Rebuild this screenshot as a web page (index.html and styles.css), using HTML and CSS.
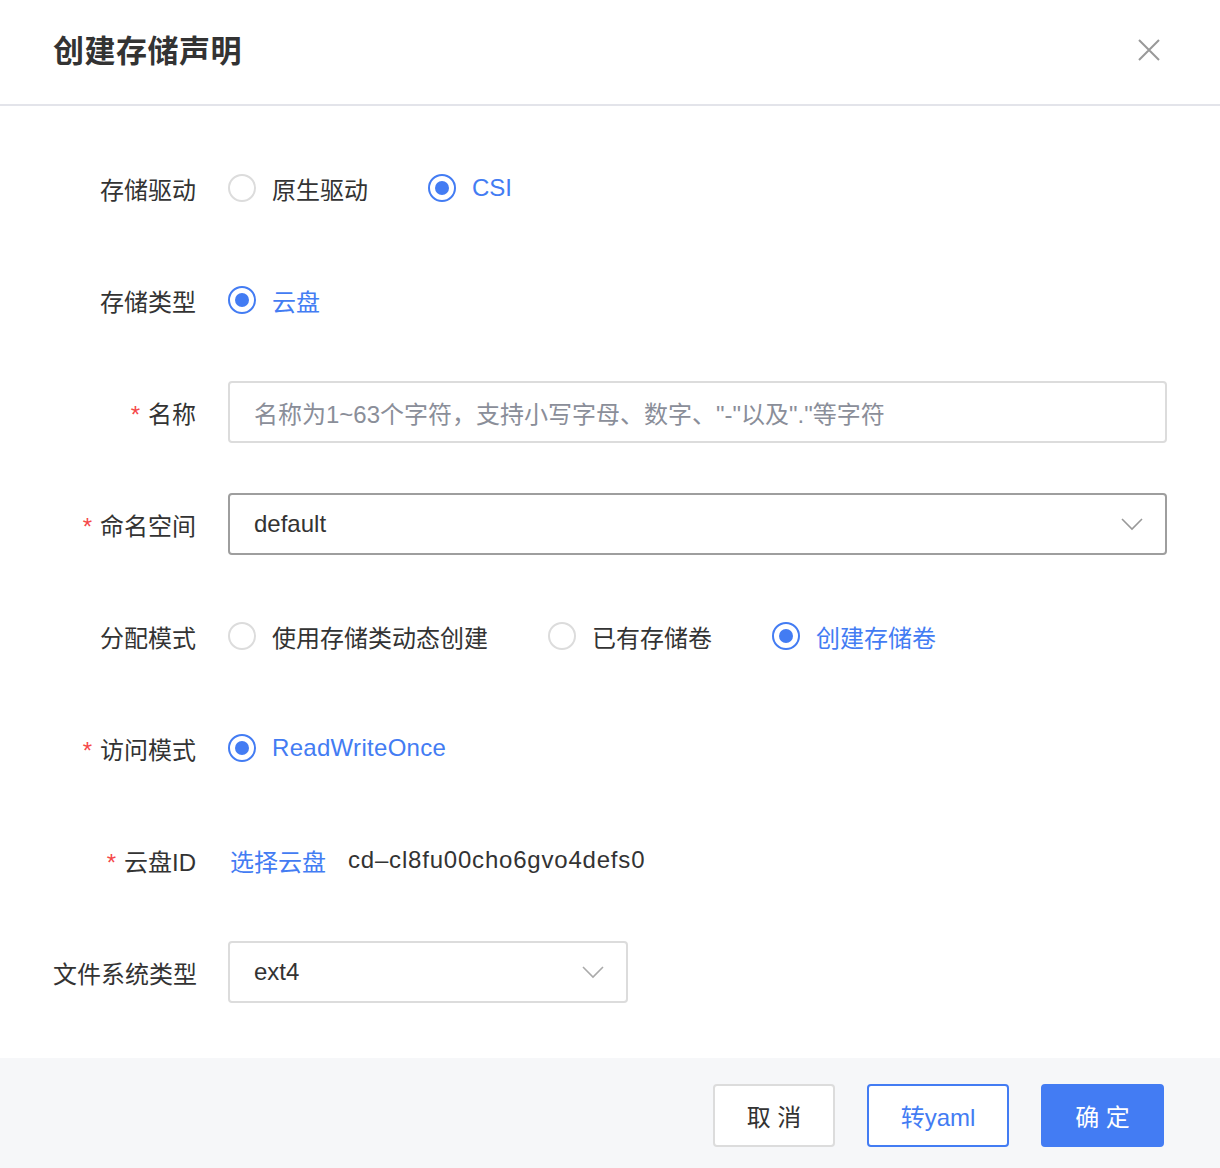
FILE: index.html
```html
<!DOCTYPE html>
<html lang="zh">
<head>
<meta charset="utf-8">
<title>创建存储声明</title>
<link rel="stylesheet" href="styles.css">
</head>
<body>
<div class="dialog">
  <header class="header">
    <h1 class="title">创建存储声明</h1>
    <button class="close" aria-label="关闭">
      <svg width="22" height="22" viewBox="0 0 22 22"><path d="M1 1 L21 21 M21 1 L1 21" stroke="#999" stroke-width="2" fill="none"/></svg>
    </button>
  </header>

  <form class="form">
    <div class="row">
      <div class="label">存储驱动</div>
      <div class="control radios">
        <label class="radio"><span class="dot"></span><span class="rtext">原生驱动</span></label>
        <label class="radio checked"><span class="dot"></span><span class="rtext">CSI</span></label>
      </div>
    </div>

    <div class="row">
      <div class="label">存储类型</div>
      <div class="control radios">
        <label class="radio checked"><span class="dot"></span><span class="rtext">云盘</span></label>
      </div>
    </div>

    <div class="row">
      <div class="label"><span class="req">*</span>名称</div>
      <div class="control">
        <div class="input placeholder">名称为1~63个字符，支持小写字母、数字、"-"以及"."等字符</div>
      </div>
    </div>

    <div class="row">
      <div class="label"><span class="req">*</span>命名空间</div>
      <div class="control">
        <div class="input select active">
          <span>default</span>
          <svg class="chev" width="22" height="13" viewBox="0 0 22 13"><path d="M1 1 L11 11 L21 1" stroke="#999" stroke-width="1.6" fill="none"/></svg>
        </div>
      </div>
    </div>

    <div class="row">
      <div class="label">分配模式</div>
      <div class="control radios">
        <label class="radio"><span class="dot"></span><span class="rtext">使用存储类动态创建</span></label>
        <label class="radio"><span class="dot"></span><span class="rtext">已有存储卷</span></label>
        <label class="radio checked"><span class="dot"></span><span class="rtext">创建存储卷</span></label>
      </div>
    </div>

    <div class="row">
      <div class="label"><span class="req">*</span>访问模式</div>
      <div class="control radios">
        <label class="radio checked"><span class="dot"></span><span class="rtext latin">ReadWriteOnce</span></label>
      </div>
    </div>

    <div class="row">
      <div class="label"><span class="req">*</span>云盘ID</div>
      <div class="control disk">
        <a class="link">选择云盘</a>
        <span class="diskid">cd–cl8fu00cho6gvo4defs0</span>
      </div>
    </div>

    <div class="row">
      <div class="label">文件系统类型</div>
      <div class="control">
        <div class="input select short">
          <span>ext4</span>
          <svg class="chev" width="22" height="13" viewBox="0 0 22 13"><path d="M1 1 L11 11 L21 1" stroke="#aaa" stroke-width="1.6" fill="none"/></svg>
        </div>
      </div>
    </div>
  </form>

  <footer class="footer">
    <button class="btn">取 消</button>
    <button class="btn outline">转yaml</button>
    <button class="btn primary">确 定</button>
  </footer>
</div>
</body>
</html>
```

FILE: styles.css
```css
* { box-sizing: border-box; }
html, body { margin: 0; padding: 0; background: #fff; }
body {
  font-family: "Liberation Sans", "Noto Sans CJK SC", sans-serif;
  color: #333;
  font-size: 24px;
}
.dialog { width: 1220px; height: 1168px; display: flex; flex-direction: column; }
.header {
  height: 106px;
  flex: none;
  border-bottom: 2px solid #e3e4ea;
  display: flex;
  align-items: center;
  justify-content: space-between;
  padding: 0 60px 8px 53px;
}
.title {
  margin: 0;
  font-size: 31px;
  font-weight: 600;
  color: #333;
  letter-spacing: 0.5px;
}
.close { background: none; border: 0; padding: 0; display: flex; cursor: pointer; margin-top: 4px; }

.form {
  flex: 1;
  padding: 51px 53px 0;
  display: flex;
  flex-direction: column;
  gap: 50px;
}
.row { display: flex; align-items: center; height: 62px; gap: 32px; }
.label {
  width: 143px;
  flex: none;
  text-align: right;
  color: #333;
  white-space: nowrap;
}
.req { color: #f5484a; margin-right: 8px; }
.control { flex: 1; display: flex; align-items: center; }
.radios { gap: 60px; }
.radio { display: flex; align-items: center; gap: 16px; cursor: pointer; }
.dot {
  width: 28px; height: 28px;
  border: 2px solid #dcdcdc;
  border-radius: 50%;
  display: flex; align-items: center; justify-content: center;
}
.radio.checked .dot { border-color: #437cf3; }
.radio.checked .dot::after {
  content: "";
  width: 14px; height: 14px;
  border-radius: 50%;
  background: #437cf3;
}
.radio.checked .rtext { color: #437cf3; }
.latin { letter-spacing: 0.3px; }
.input {
  width: 100%;
  height: 62px;
  border: 2px solid #dcdcdc;
  border-radius: 4px;
  padding: 0 24px;
  display: flex;
  align-items: center;
  justify-content: space-between;
}
.placeholder { color: #8a8e99; }
.select.active { border-color: #9e9e9e; }
.select.short { width: 400px; }
.chev { margin-right: -2px; }
.disk { gap: 22px; padding-left: 2px; }
.link { color: #437cf3; }
.diskid { letter-spacing: 0.8px; }
.footer {
  height: 110px;
  flex: none;
  background: #f6f7f9;
  display: flex;
  align-items: center;
  justify-content: flex-end;
  gap: 32px;
  padding: 4px 56px 0 0;
}
.btn {
  height: 63px;
  min-width: 122px;
  padding: 0 30px;
  border: 2px solid #dcdcdc;
  border-radius: 4px;
  background: #fff;
  color: #333;
  font-family: "Liberation Sans", "Noto Sans CJK SC", sans-serif;
  font-size: 24px;
  cursor: pointer;
}
.btn.outline { border-color: #437cf3; color: #437cf3; width: 142px; }
.btn.primary { background: #437cf3; border-color: #437cf3; color: #fff; width: 123px; }
```
